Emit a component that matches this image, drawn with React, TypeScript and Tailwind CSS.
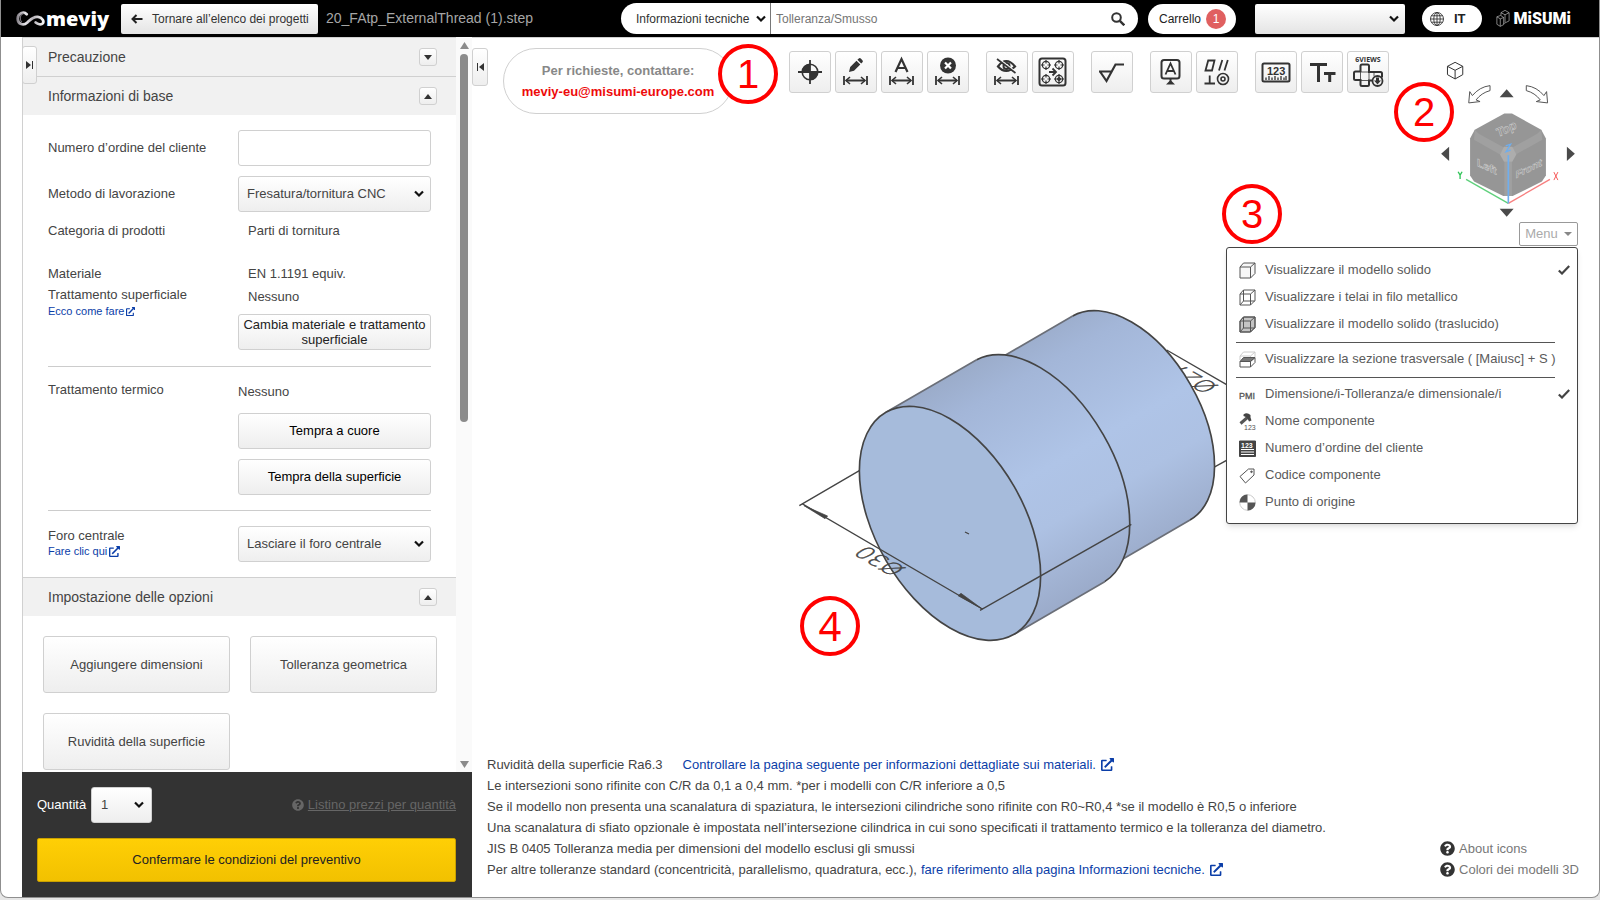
import type { ReactNode } from "react";
import { FaExternalLinkAlt, FaQuestionCircle } from "react-icons/fa";

const buttonFace = "rounded-[3px] border border-[#d0d0d0] bg-linear-to-b from-white to-[#eeeeee]";

function Chevron({ className = "" }: { className?: string }) {
  return (
    <svg viewBox="0 0 10 8" className={`pointer-events-none absolute top-1/2 h-2 w-[10px] -translate-y-1/2 ${className}`} fill="none" stroke="#111" strokeWidth="2.2">
      <path d="M1 1.5 5 5.5 9 1.5" />
    </svg>
  );
}

function Triangle({ up = false }: { up?: boolean }) {
  return (
    <svg viewBox="0 0 8 5" className="h-[5px] w-2" fill="#333">
      <path d={up ? "M0 5 4 0 8 5Z" : "M0 0 4 5 8 0Z"} />
    </svg>
  );
}

function Header() {
  return (
    <header className="flex h-[37px] shrink-0 items-center bg-black pr-[28px] pl-[15px]">
      <div className="flex w-[605px] shrink-0 items-center">
        <a href="#home" className="flex w-[105px] shrink-0 items-center text-white" aria-label="meviy">
          <svg viewBox="0 0 84 46" className="mr-px h-4 w-[29px]" fill="none">
            <defs>
              <linearGradient id="loop" x1="0" x2="1">
                <stop offset="0" stopColor="#8d8990" />
                <stop offset="0.3" stopColor="#e8e6ea" />
                <stop offset="0.6" stopColor="#b5b1b8" />
                <stop offset="1" stopColor="#f4f4f4" />
              </linearGradient>
            </defs>
            <path d="M31 9C22 0 5 7 5 22c0 17 17 21 28 11 9-8 17-19 31-16 14 2 18 14 13 19-4 5-14 2-20-3" stroke="url(#loop)" strokeWidth="8" strokeLinecap="round" />
            <path d="M22 7C12 9 9 24 17 32" stroke="#77727a" strokeWidth="3" />
          </svg>
          <span className="font-['Open_Sans',sans-serif] text-[20px] leading-6 font-extrabold">meviy</span>
        </a>
        <button className="flex h-[30px] w-[197px] shrink-0 items-center rounded-[2px] bg-linear-to-b from-white to-[#e4e4e4] pl-[10px] text-[12px] whitespace-nowrap text-[#333]">
          <svg viewBox="0 0 12 10" className="mr-[9px] h-[10px] w-3 shrink-0" fill="none" stroke="#222" strokeWidth="2">
            <path d="M11.500 5H1.500M5.500 1 1.500 5l4 4" />
          </svg>
          Tornare all’elenco dei progetti
        </button>
        <span className="ml-2 text-[14px] whitespace-nowrap text-[#a6a6a6]">20_FAtp_ExternalThread (1).step</span>
      </div>

      <div className="flex h-[31px] min-w-0 flex-1 items-center overflow-hidden rounded-full bg-white">
        <div className="relative h-full w-[150px] shrink-0 border-r border-[#777]">
          <select aria-label="Ambito di ricerca" className="h-full w-full appearance-none pl-[15px] text-[12px] text-[#333]">
            <option>Informazioni tecniche</option>
          </select>
          <Chevron className="right-1" />
        </div>
        <input aria-label="Cerca" placeholder="Tolleranza/Smusso" className="h-full min-w-0 flex-1 pl-[5px] text-[12px] placeholder:text-[#757575]" />
        <button aria-label="Avvia ricerca" className="mr-[13px]">
          <svg viewBox="0 0 14 14" className="h-[14px] w-[14px]" fill="none" stroke="#333" strokeWidth="2">
            <circle cx="5.500" cy="5.500" r="4.300" />
            <path d="m8.800 8.800 4.500 4.500" strokeWidth="2.400" />
          </svg>
        </button>
      </div>

      <button className="ml-[10px] flex h-[30px] w-[88px] shrink-0 items-center justify-between rounded-full bg-white pr-[10px] pl-[11px] text-[12px] text-[#222]">
        Carrello
        <span className="flex h-5 w-5 items-center justify-center rounded-full bg-[#e06060] text-[12px] text-white">1</span>
      </button>
      <div className="relative ml-[19px] h-[30px] w-[150px] shrink-0">
        <select aria-label="Account" className="h-full w-full appearance-none rounded-[2px] bg-linear-to-b from-white to-[#e4e4e4] text-[13px]">
          <option></option>
        </select>
        <Chevron className="right-[6px]" />
      </div>
      <button className="ml-[17px] flex h-[27px] w-[60px] shrink-0 items-center rounded-full bg-white pl-2 text-[13px] font-bold text-[#222]">
        <svg viewBox="0 0 14 14" className="mr-[10px] h-[14px] w-[14px]" fill="none" stroke="#333" strokeWidth="0.900">
          <circle cx="7" cy="7" r="6.500" />
          <ellipse cx="7" cy="7" rx="3.200" ry="6.500" />
          <path d="M7 .5v13M.5 7h13M1.300 3.800h11.400M1.300 10.200h11.400" />
        </svg>
        IT
      </button>
      <a href="#misumi" className="ml-[14px] flex w-[75px] shrink-0 items-center justify-between text-white">
        <svg viewBox="0 0 40 50" className="h-[17px] w-[14px] shrink-0" fill="none" stroke="#bbb" strokeWidth="2">
          <path d="M2 20 13 16 22 22V43L12 48 2 42ZM2 20 12 26 22 22M12 26V48M14 16V8L26 1 38 8V32L22 40M14 8 26 14 38 8M26 14V36" />
        </svg>
        <span className="font-['Roboto',sans-serif] text-[16px] leading-5 font-black">MiSUMi</span>
      </a>
    </header>
  );
}

function SectionBar({ title, open }: { title: string; open: boolean }) {
  return (
    <div className="flex h-[39px] items-center justify-between border-t border-[#d0d0d0] bg-[#f1f1f1] pr-[19px] pl-[25px]">
      <h2 className="text-[14px] text-[#444]">{title}</h2>
      <button aria-label={title} className={`flex h-[18px] w-[18px] items-center justify-center ${buttonFace}`}>
        <Triangle up={open} />
      </button>
    </div>
  );
}

function Row({ label, children, className = "" }: { label: ReactNode; children: ReactNode; className?: string }) {
  return (
    <div className={`flex ${className}`}>
      <div className="w-[190px] shrink-0">{label}</div>
      <div className="min-w-0 flex-1">{children}</div>
    </div>
  );
}

function PanelSelect({ id, value }: { id: string; value: string }) {
  return (
    <div className="relative">
      <select id={id} className={`h-9 w-full appearance-none pl-2 text-[13px] text-[#444] ${buttonFace}`}>
        <option>{value}</option>
      </select>
      <Chevron className="right-[7px]" />
    </div>
  );
}

function Sidebar() {
  return (
    <aside className="relative ml-[21px] flex w-[450px] shrink-0 flex-col border-l border-[#d0d0d0]">
      <div className="flex min-h-0 flex-1">
        <div className="min-w-0 flex-1 overflow-hidden">
          <SectionBar title="Precauzione" open={false} />
          <SectionBar title="Informazioni di base" open />
          <div className="pr-[25px] pl-[25px] text-[13px] leading-4 text-[#444]">
            <Row className="items-center pt-[15px]" label={<label htmlFor="order">Numero d’ordine del cliente</label>}>
              <input id="order" className="block h-9 w-full rounded-[3px] border border-[#d0d0d0] px-2" />
            </Row>
            <Row className="items-center pt-[10px]" label={<label htmlFor="method">Metodo di lavorazione</label>}>
              <PanelSelect id="method" value="Fresatura/tornitura CNC" />
            </Row>
            <Row className="pt-[11px]" label="Categoria di prodotti">
              <p className="pl-[10px]">Parti di tornitura</p>
            </Row>
            <Row
              className="pt-[27px]"
              label={
                <>
                  <p>Materiale</p>
                  <p className="pt-[5px]">Trattamento superficiale</p>
                  <a href="#guida" className="flex items-center gap-[2px] text-[11px] leading-4 text-[#0b3ea8]">
                    Ecco come fare
                    <FaExternalLinkAlt size={9} />
                  </a>
                </>
              }
            >
              <p className="pl-[10px]">EN 1.1191 equiv.</p>
              <p className="pt-[7px] pb-[9px] pl-[10px]">Nessuno</p>
              <button className={`h-9 w-full text-[13px] leading-[15px] text-[#222] ${buttonFace}`}>
                Cambia materiale e trattamento superficiale
              </button>
            </Row>
            <hr className="mt-4 border-[#ccc]" />
            <Row className="pt-[15px]" label="Trattamento termico">
              <p className="pt-[2px]">Nessuno</p>
              <button className={`mt-[13px] h-9 w-full text-[13px] text-black ${buttonFace}`}>Tempra a cuore</button>
              <button className={`mt-[10px] h-9 w-full text-[13px] text-black ${buttonFace}`}>Tempra della superficie</button>
            </Row>
            <hr className="mt-[15px] border-[#ccc]" />
            <Row
              className="pt-[15px] pb-[15px]"
              label={
                <>
                  <label htmlFor="hole" className="block pt-[2px]">Foro centrale</label>
                  <a href="#foro" className="flex items-center gap-[2px] text-[11px] leading-[14px] text-[#0b3ea8]">
                    Fare clic qui
                    <FaExternalLinkAlt size={11} />
                  </a>
                </>
              }
            >
              <PanelSelect id="hole" value="Lasciare il foro centrale" />
            </Row>
          </div>
          <SectionBar title="Impostazione delle opzioni" open />
          <div className="grid grid-cols-2 gap-5 pt-[20px] pr-[19px] pl-[20px] text-[13px] text-[#444]">
            <button className={`h-[57px] ${buttonFace}`}>Aggiungere dimensioni</button>
            <button className={`h-[57px] ${buttonFace}`}>Tolleranza geometrica</button>
            <button className={`h-[57px] ${buttonFace}`}>Ruvidità della superficie</button>
          </div>
        </div>
        <div className="flex w-4 shrink-0 flex-col items-center bg-[#fafafa] pt-[5px] pb-1">
          <svg viewBox="0 0 9 7" className="h-[7px] w-[9px] shrink-0" fill="#8b8b8b"><path d="M0 7 4.500 0 9 7Z" /></svg>
          <div className="mt-[5px] flex w-2 flex-1 flex-col">
            <div className="h-[52%] rounded-full bg-[#8b8b8b]" />
          </div>
          <svg viewBox="0 0 9 7" className="h-[7px] w-[9px] shrink-0" fill="#8b8b8b"><path d="M0 0 4.500 7 9 0Z" /></svg>
        </div>
      </div>

      <div className="-ml-px bg-[#333] pt-[15px] pr-4 pb-[15px] pl-[15px]">
        <div className="flex items-center">
          <label htmlFor="qty" className="w-[54px] text-[13px] text-white">Quantità</label>
          <div className="relative w-[61px]">
            <select id="qty" className={`h-9 w-full appearance-none pl-[9px] text-[13px] text-[#444] ${buttonFace}`}>
              <option>1</option>
            </select>
            <Chevron className="right-2" />
          </div>
          <a href="#listino" className="ml-auto flex items-center gap-1 text-[13px] text-[#666] underline">
            <FaQuestionCircle size={12} />
            Listino prezzi per quantità
          </a>
        </div>
        <button className="mt-[15px] h-11 w-full rounded-[2px] border border-[#c9a000] bg-linear-to-b from-[#ffcf05] to-[#f2c100] text-[13px] text-[#222]">
          Confermare le condizioni del preventivo
        </button>
      </div>

      <button aria-label="Espandi pannello" className={`absolute top-[9px] -left-px flex h-[38px] w-[15px] items-center justify-center ${buttonFace}`}>
        <svg viewBox="0 0 7 8" className="h-2 w-[7px]" fill="#333"><path d="M0 0 5 4 0 8ZM6 0h1v8H6Z" /></svg>
      </button>
    </aside>
  );
}

const dimension = (
  <>
    <path d="M9 25v9M32 25v9M11 29.500h19" strokeWidth="1.800" />
    <path d="m15 26-4 3.500 4 3.500M26 26l4 3.500-4 3.500" strokeWidth="1.600" />
  </>
);

const crosshair = (cx: number, cy: number) => (
  <g strokeWidth="1.200">
    <circle cx={cx} cy={cy} r="3.700" />
    <path d={`M${cx - 5} ${cy}h3.500m3 0h3.500M${cx} ${cy - 5}v3.500m0 3v3.500`} />
  </g>
);

const toolGroups: { name: string; icon: ReactNode }[][] = [
  [
    {
      name: "Origine",
      icon: (
        <>
          <circle cx="21" cy="21" r="7.800" strokeWidth="1.600" />
          <path d="M21 9v24M9 21h24" strokeWidth="1.800" />
          <path d="M21 21V13A8 8 0 0 0 13 21ZM21 21v8a8 8 0 0 0 8-8Z" fill="#333" stroke="none" />
        </>
      ),
    },
    {
      name: "Modifica dimensione",
      icon: (
        <>
          {dimension}
          <path d="m14 21 1.200-5 6.300-6.300 3.800 3.800L19 19.800ZM22.400 8.800l1.400-1.300q1-.8 2 .1l1.600 1.600q1 1 .1 2l-1.300 1.400Z" fill="#333" stroke="none" />
        </>
      ),
    },
    { name: "Testo dimensione", icon: <>{dimension}<path d="M14.500 21 20.500 8l6 13M16.500 17h8" strokeWidth="2.200" /></> },
    {
      name: "Elimina dimensione",
      icon: (
        <>
          {dimension}
          <circle cx="21" cy="14.500" r="8" fill="#333" stroke="none" />
          <path d="m18 11.500 6 6m0-6-6 6" stroke="#fff" strokeWidth="2.200" />
        </>
      ),
    },
  ],
  [
    {
      name: "Nascondi dimensione",
      icon: (
        <>
          {dimension}
          <path d="M12 15.500q8-11 17 0-9 9-17 0Z" strokeWidth="2.200" />
          <circle cx="20.500" cy="15" r="3" strokeWidth="2" />
          <path d="m12 7.500 18.500 14" stroke="#f8f8f8" strokeWidth="1.600" />
          <path d="m11 8 18.500 14" strokeWidth="1.600" />
        </>
      ),
    },
    {
      name: "Gruppo fori",
      icon: (
        <>
          <rect x="7.500" y="7.500" width="26" height="27" rx="2.500" strokeWidth="2" />
          {crosshair(14, 14)}
          {crosshair(27, 14)}
          {crosshair(14, 28)}
          {crosshair(27, 28)}
          <circle cx="27" cy="28" r="1.500" fill="#333" strokeWidth="1" />
          <path d="M17 21h6m-2.500-3.500L24 21l-3.500 3.500" strokeWidth="1.800" />
        </>
      ),
    },
  ],
  [{ name: "Rugosità", icon: <path d="M8 20.500h13.500M9 20.500l6.500 9.500L24.500 13.500H33" strokeWidth="2.200" /> }],
  [
    {
      name: "Riferimento",
      icon: (
        <>
          <rect x="11.500" y="9" width="18" height="18.500" rx="2.500" strokeWidth="2" />
          <path d="m15.500 23.500 5-11 5 11M17 20h7" strokeWidth="1.800" />
          <path d="M20.500 27v5" strokeWidth="2" />
          <path d="M19.500 30h2l3.500 3.500h-9Z" fill="#333" stroke="none" />
        </>
      ),
    },
    {
      name: "Tolleranza geometrica",
      icon: (
        <>
          <path d="m9.500 19.500 2.700-10H18.500l-2.500 10Z" />
          <path d="m23 19.500 3.300-10.500M28.500 19.500 31.800 9" />
          <path d="M8.500 32.500H19M13.700 32.500V24.500" />
          <circle cx="27" cy="28" r="5.500" strokeWidth="1.600" />
          <circle cx="27" cy="28" r="2" strokeWidth="1.600" />
        </>
      ),
    },
  ],
  [
    {
      name: "Numero",
      icon: (
        <>
          <rect x="7.500" y="12.500" width="27" height="18" rx="1.500" strokeWidth="2" />
          <path d="M11 29v-2.500M14 29v-4M17 29v-2.500M20 29v-4M23 29v-2.500M26 29v-4M29 29v-2.500M31 29v-4" strokeWidth="1.300" />
          <text x="12" y="24" fontSize="11" fontWeight="700" fill="#333" stroke="none" className="font-['Liberation_Sans',sans-serif]">123</text>
        </>
      ),
    },
    { name: "Dimensione testo", icon: <path d="M9 13.500h17M17.500 13v18M23 22.500h11.500M28.700 22v9" strokeWidth="3" /> },
    {
      name: "Sei viste",
      icon: (
        <>
          <text x="21" y="11" textAnchor="middle" fontSize="7" fontWeight="700" fill="#333" stroke="none" className="font-['Open_Sans',sans-serif]">6VIEWS</text>
          <path d="M13.500 21v-6q0-1.500 1.500-1.500h5.500q1.500 0 1.500 1.500v6h11.500q1.500 0 1.500 1.500v4M13.500 20.500H8.500q-1.500 0-1.500 1.500v5.500q0 1.500 1.500 1.500h5v4.500q0 1.500 1.500 1.500h5.500q1.500 0 1.500-1.500V29.500h3.500" strokeWidth="2" />
          <path d="M13.500 21h8.500v8.500h-8.500ZM27 21v4" strokeWidth="0.800" />
          <circle cx="30.500" cy="30" r="5" fill="#f4f4f4" strokeWidth="1.800" />
          <path d="M29 26.500h3v3h2l-3.500 4-3.500-4h2Z" fill="#333" stroke="none" />
        </>
      ),
    },
  ],
];

function Toolbar() {
  return (
    <div className="flex gap-[17px]">
      {toolGroups.map((group, i) => (
        <div key={i} className="flex gap-1">
          {group.map((tool) => (
            <button key={tool.name} aria-label={tool.name} className={`h-[42px] w-[42px] ${buttonFace}`}>
              <svg viewBox="1 1 40 40" className="h-10 w-10" fill="none" stroke="#333" strokeWidth="1.800">
                {tool.icon}
              </svg>
            </button>
          ))}
        </div>
      ))}
    </div>
  );
}

function Model() {
  return (
    <svg viewBox="0 0 1380 1170" className="absolute top-[242px] left-[308px] h-[390px] w-[460px]" fill="none" stroke="#444" strokeWidth="5">
      <defs>
        <linearGradient id="shade" gradientUnits="userSpaceOnUse" x1="318" y1="397" x2="702" y2="1063">
          <stop offset="0" stopColor="#9bacca" />
          <stop offset="0.15" stopColor="#a3b6d8" />
          <stop offset="0.5" stopColor="#afc4e7" />
          <stop offset="0.7" stopColor="#adc1e3" />
          <stop offset="1" stopColor="#9babca" />
        </linearGradient>
      </defs>
      <path d="M1160 210 1345 317M1300 563 1345 538" strokeWidth="4" />
      <text transform="matrix(-0.866 -0.5 0.866 -0.5 1318 319)" fontSize="68" fontWeight="200" fill="#444" strokeWidth="1.500" className="font-['DejaVu_Sans',sans-serif]">Ø27</text>
      <path d="M606 266 878 108A352.800 203.700 60 0 1 1230 720L958 878Z" fill="url(#shade)" stroke="none" />
      <path d="M606 266 878 108M958 878 1230 720" stroke="#6b6f78" />
      <path d="M878 108A352.800 203.700 60 0 1 1230 720" />
      <path d="M318 397 590 239A384.500 222 60 0 1 974 905L702 1063Z" fill="url(#shade)" stroke="none" />
      <path d="M318 397 590 239M974 905 702 1063" stroke="#6b6f78" />
      <path d="M590 239A384.500 222 60 0 1 974 905" />
      <ellipse cx="510" cy="730" rx="384.500" ry="222" transform="rotate(60 510 730)" fill="#a6bbdb" />
      <path d="M58 677 238 572M66 671 607 987M600 991 1054 733M555 756 567 762" strokeWidth="4" />
      <path d="M72 677 143 708 135 716ZM607 987 543 940 534 947Z" fill="#444" strokeWidth="2" />
      <text transform="matrix(-0.866 -0.5 0.866 -0.5 380 866)" fontSize="68" fontWeight="200" fill="#444" strokeWidth="1.500" className="font-['DejaVu_Sans',sans-serif]">Ø30</text>
    </svg>
  );
}

function ViewCube() {
  return (
    <svg viewBox="114 22 420 490" className="h-[163px] w-[140px]" fill="none" role="img" aria-label="Orientamento della vista">
      <path d="M165 35 188 47V72L165 85 142 72V47ZM142 47 165 59 188 47M165 59V85" stroke="#333" strokeWidth="3" />
      <path d="M270 105V120Q244 127 228 148L240 153 206 157 209 123 217 135Q238 109 270 105ZM379 105V120Q405 127 421 148L409 153 443 157 440 123 432 135Q411 109 379 105Z" stroke="#555" strokeWidth="3" />
      <path d="M299 140 320 116 341 140ZM299 475H341L320 499ZM147 289V332L123 310ZM501 289V332L525 310Z" fill="#4a4a4a" />
      <path d="M313 189H336L424 238 438 264V375L426 393 338 437H310L222 393 210 375V264L224 238Z" fill="#969696" />
      <path d="M224 238 236 250 313 292 300 312 222 268ZM424 238 412 250 336 292 347 312 427 268ZM313 333H336V437H313Z" fill="#a0a0a0" />
      <path d="M312 289H337L349 312 337 334H312L300 312Z" fill="#adadad" />
      <g fill="#909090" stroke="#d0d0d0" strokeWidth="1.500" fontWeight="700" className="font-['Liberation_Sans',sans-serif]">
        <text transform="translate(294 260) rotate(-25) skewX(-8)" fontSize="36">Top</text>
        <text transform="translate(231 346) skewY(25)" fontSize="32">Left</text>
        <text transform="translate(347 384) skewY(-26)" fontSize="31">Front</text>
      </g>
      <path d="M198 387 325 459" stroke="#5fd07c" strokeWidth="4" />
      <path d="M450 387 325 459" stroke="#f77f7f" strokeWidth="4" />
      <path d="M325 459V314" stroke="#6faeee" strokeWidth="5" />
      <path d="M174 364 180 374 186 364M180 374V386" stroke="#2fc457" strokeWidth="4" />
      <path d="M462 365 474 389M474 365 462 389" stroke="#f65a5a" strokeWidth="3" />
      <path d="M317 286 332 281 318 304 332 299" stroke="#6faeee" strokeWidth="4" />
    </svg>
  );
}

const cubeEdges = "M1 5h10.500v11H1ZM1 5l3.500-4H16v10.500L11.500 16M11.500 5 16 1";

const menuGroups: { label: string; checked?: boolean; icon: ReactNode }[][] = [
  [
    { label: "Visualizzare il modello solido", checked: true, icon: <path d={cubeEdges} fill="#f7f7f7" /> },
    { label: "Visualizzare i telai in filo metallico", icon: <path d={`${cubeEdges}M4.500 1v11H16M4.500 12 1 16`} /> },
    {
      label: "Visualizzare il modello solido (traslucido)",
      icon: (
        <>
          <path d="M1 5 4.500 1H16v10.500L11.500 16H1Z" fill="#c4c4c4" />
          <path d={`${cubeEdges}M4.500 1v11H16M4.500 12 1 16`} />
        </>
      ),
    },
  ],
  [
    {
      label: "Visualizzare la sezione trasversale ( [Maiusc] + S )",
      icon: (
        <>
          <path d="M1 9V5l3.500-4H16v5M1 5h10.500L16 1M11.500 5v3" stroke="#ccc" />
          <path d="M1 10.500h10.500V16H1ZM11.500 16 16 11.500V6.500l-4.500 4" />
          <path d="m1 10.500 3.500-4H16l-4.500 4Z" fill="#777" />
        </>
      ),
    },
  ],
  [
    {
      label: "Dimensione/i-Tolleranza/e dimensionale/i",
      checked: true,
      icon: <text x="0" y="13" fontSize="9" fill="#555" stroke="#555" strokeWidth="0.300" className="font-['Liberation_Sans',sans-serif]">PMI</text>,
    },
    {
      label: "Nome componente",
      icon: (
        <>
          <path d="M1.500 10.500 9 4" strokeWidth="3" />
          <path d="M4.500 1.500Q8-1 11.500 2V4.500l1 3-2.500 1L8 4.500 4.500 3Z" fill="#444" stroke="none" />
          <text x="5" y="17" fontSize="7" fill="#555" stroke="none" className="font-['Liberation_Sans',sans-serif]">123</text>
        </>
      ),
    },
    {
      label: "Numero d’ordine del cliente",
      icon: (
        <>
          <path d="M.5 1h16v15.500H.5Z" fill="#444" stroke="#444" />
          <path d="M2 9.500h13M2 12h13M2 14.500h13" stroke="#fff" />
          <text x="2" y="7.500" fontSize="7" fontWeight="700" fill="#fff" stroke="none" className="font-['Liberation_Sans',sans-serif]">123</text>
        </>
      ),
    },
    {
      label: "Codice componente",
      icon: (
        <>
          <path d="M1 9.500 9.500 2h5.500V8L6.500 16Z" strokeLinejoin="round" />
          <circle cx="12.500" cy="4.800" r="0.800" fill="#555" />
        </>
      ),
    },
    {
      label: "Punto di origine",
      icon: (
        <>
          <circle cx="8.500" cy="8.500" r="7.800" fill="#fff" stroke="#ccc" />
          <path d="M8.500 8.500V.5a8 8 0 0 0-8 8ZM8.500 8.500v8a8 8 0 0 0 8-8Z" fill="#555" stroke="none" />
        </>
      ),
    },
  ],
];

function ViewMenu() {
  return (
    <div className="absolute top-full right-0 mt-px w-[352px] rounded-[3px] border border-[#444] bg-white py-2 shadow-md">
      {menuGroups.map((group, i) => (
        <div key={i}>
          {i > 0 && <hr className="mt-[5px] mr-[22px] mb-[2px] ml-[9px] border-[#555]" />}
          {group.map((item) => (
            <button key={item.label} className="flex h-[27px] w-full items-center pr-[7px] pl-3 text-[13px] whitespace-nowrap text-[#5a5a5a]">
              <svg viewBox="0 0 17 17" className="mt-[2px] mr-[9px] h-[17px] w-[17px] shrink-0" fill="none" stroke="#555">
                {item.icon}
              </svg>
              {item.label}
              {item.checked && (
                <svg viewBox="0 0 12 10" className="ml-auto h-[10px] w-3" fill="none" stroke="#444" strokeWidth="2.200">
                  <path d="M.8 5.500 4 8.500 11.200 1" />
                </svg>
              )}
            </button>
          ))}
        </div>
      ))}
    </div>
  );
}

function Marker({ children, className }: { children: ReactNode; className: string }) {
  return (
    <span className={`absolute flex h-[60px] w-[60px] items-center justify-center rounded-full border-4 border-[#ff0000] text-[40px] leading-none text-[#ff0000] ${className}`}>
      {children}
    </span>
  );
}

function Notes() {
  const link = "inline-flex items-center gap-[5px] text-[#0b3ea8]";
  return (
    <div className="mt-auto flex items-end justify-between pr-[20px] pb-[17px] pl-[15px] text-[13px] leading-[21px]">
      <div className="text-[#444]">
        <p className="flex">
          <span className="mr-5">Ruvidità della superficie Ra6.3</span>
          <a href="#materiali" className={link}>
            Controllare la pagina seguente per informazioni dettagliate sui materiali.
            <FaExternalLinkAlt size={13} />
          </a>
        </p>
        <p>Le intersezioni sono rifinite con C/R da 0,1 a 0,4 mm. *per i modelli con C/R inferiore a 0,5</p>
        <p>Se il modello non presenta una scanalatura di spaziatura, le intersezioni cilindriche sono rifinite con R0~R0,4 *se il modello è R0,5 o inferiore</p>
        <p>Una scanalatura di sfiato opzionale è impostata nell’intersezione cilindrica in cui sono specificati il trattamento termico e la tolleranza del diametro.</p>
        <p>JIS B 0405 Tolleranza media per dimensioni del modello esclusi gli smussi</p>
        <p className="flex">
          <span className="mr-1">Per altre tolleranze standard (concentricità, parallelismo, quadratura, ecc.),</span>
          <a href="#tecniche" className={link}>
            fare riferimento alla pagina Informazioni tecniche.
            <FaExternalLinkAlt size={13} />
          </a>
        </p>
      </div>
      <div className="text-[#777]">
        <a href="#icone" className="flex items-center gap-1">
          <FaQuestionCircle size={15} color="#333" />
          About icons
        </a>
        <a href="#colori" className="flex items-center gap-1">
          <FaQuestionCircle size={15} color="#333" />
          Colori dei modelli 3D
        </a>
      </div>
    </div>
  );
}

function Viewer() {
  return (
    <main className="relative flex min-w-0 flex-1 flex-col border-t border-[#d0d0d0]">
      <Model />
      <div className="relative flex items-start">
        <button aria-label="Comprimi pannello" className={`mt-[10px] flex h-[38px] w-4 shrink-0 items-center justify-center ${buttonFace}`}>
          <svg viewBox="0 0 7 8" className="h-2 w-[7px]" fill="#333"><path d="M7 0 2 4 7 8ZM0 0h1v8H0Z" /></svg>
        </button>
        <div className="mt-[10px] ml-[15px] flex h-[66px] w-[230px] shrink-0 flex-col justify-center rounded-full border border-[#d0d0d0] text-center text-[13px] leading-[21px] font-bold">
          <p className="text-[#888]">Per richieste, contattare:</p>
          <a href="mailto:meviy-eu@misumi-europe.com" className="text-[#ee0a0a]">meviy-eu@misumi-europe.com</a>
        </div>
        <div className="mt-[13px] ml-[56px] shrink-0">
          <Toolbar />
        </div>
        <div className="mt-[20px] mr-[21px] ml-auto flex flex-col items-end gap-px">
          <ViewCube />
          <div className="relative">
            <button className="flex h-6 w-[59px] items-center justify-center gap-[6px] rounded-[2px] border border-[#999] bg-white text-[13px] text-[#aaa]">
              Menu
              <svg viewBox="0 0 8 4" className="h-1 w-2" fill="#888"><path d="M0 0h8L4 4Z" /></svg>
            </button>
            <ViewMenu />
          </div>
        </div>
      </div>
      <Notes />
      <Marker className="top-[6px] left-[246px] bg-white">1</Marker>
      <Marker className="top-[44px] right-[145px]">2</Marker>
      <Marker className="top-[146px] right-[317px]">3</Marker>
      <Marker className="top-[558px] left-[328px] font-['Noto_Sans',sans-serif]">4</Marker>
    </main>
  );
}

export default function App() {
  return (
    <div className="h-screen bg-[#e6e6e6] pb-[2px] font-['Liberation_Sans',Arial,sans-serif]">
      <div className="flex h-full flex-col overflow-hidden rounded-b-lg border-x border-b border-[#8f8f8f] bg-white">
        <Header />
        <div className="flex min-h-0 flex-1">
          <Sidebar />
          <Viewer />
        </div>
      </div>
    </div>
  );
}
